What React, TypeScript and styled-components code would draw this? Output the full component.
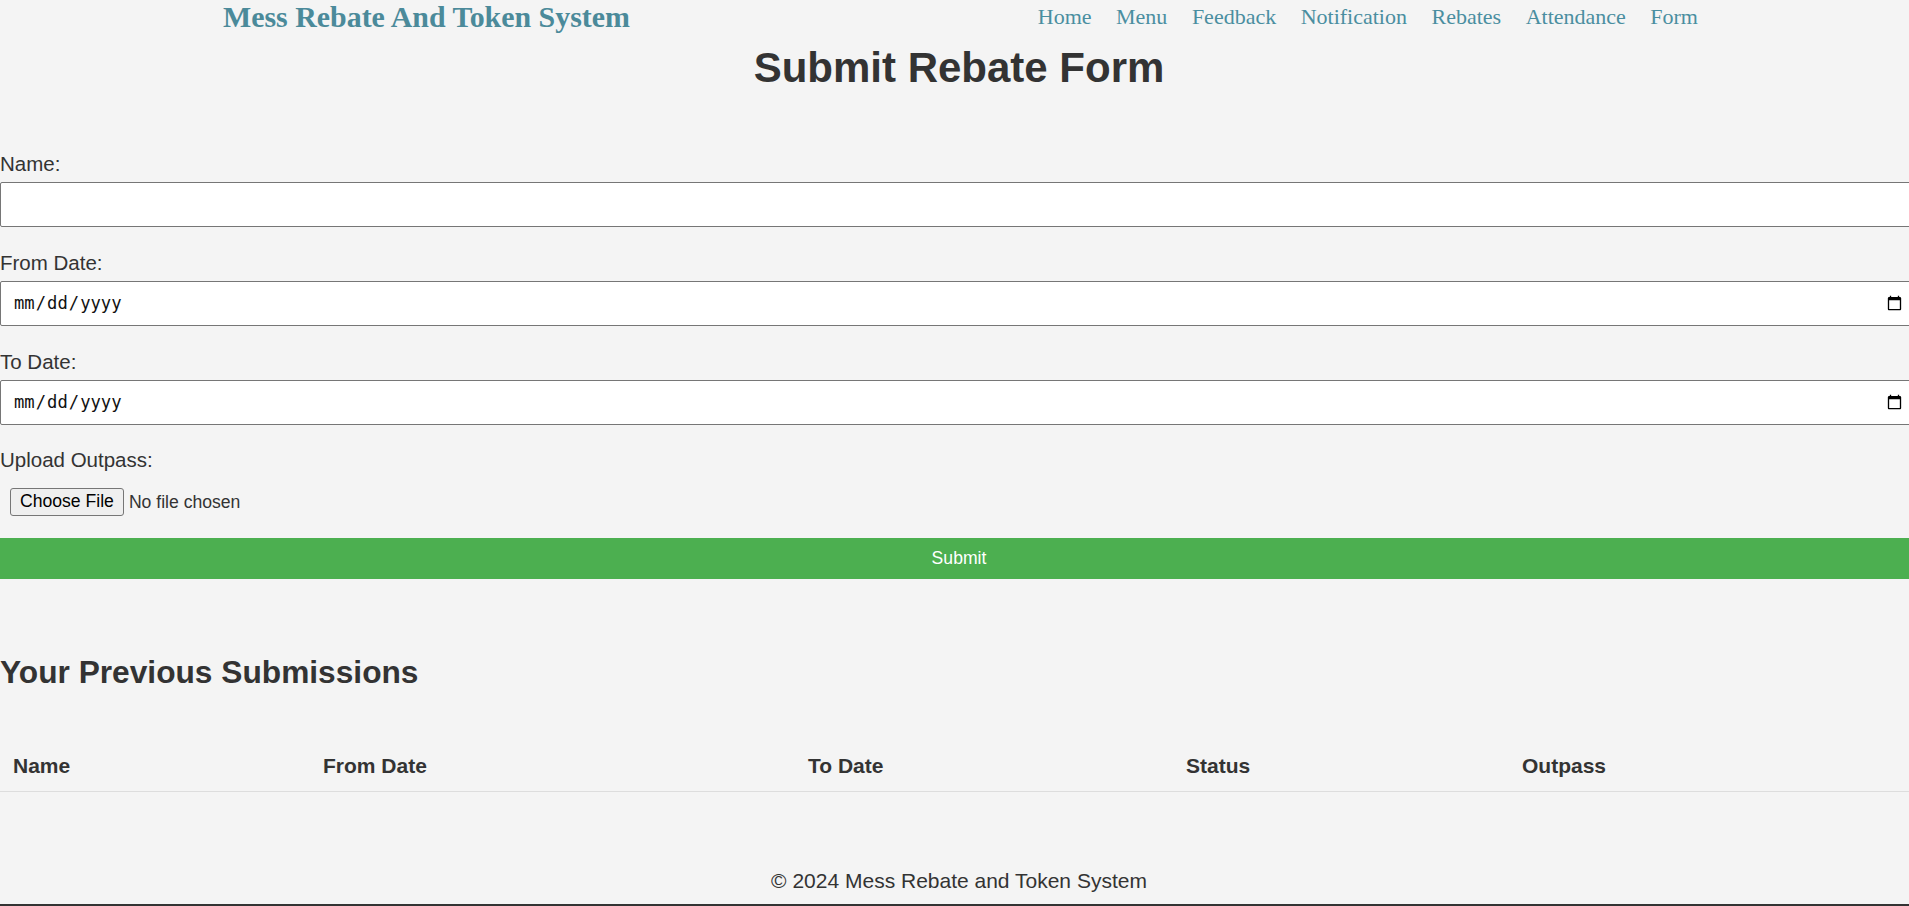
import React from "react";
import styled, { createGlobalStyle } from "styled-components";

const Global = createGlobalStyle`
  html, body { margin: 0; padding: 0; background: #f4f4f4; }
  body {
    overflow-x: hidden;
    font-family: "Liberation Sans", Arial, sans-serif;
    color: #333;
  }
  * { box-sizing: border-box; }
`;

const Page = styled.div`
  width: 1918px;
  display: flex;
  flex-direction: column;
`;

const Header = styled.header`
  height: 34px;
  display: flex;
  align-items: center;
  padding: 0 220px 0 223px;
`;

const Logo = styled.div`
  font-family: "Liberation Serif", "Times New Roman", serif;
  font-weight: bold;
  font-size: 29.9px;
  line-height: 34px;
  color: #4b8a9a;
`;

const Nav = styled.nav`
  margin-left: auto;
  display: flex;
  gap: 24.5px;
`;

const NavLink = styled.a`
  font-family: "Liberation Serif", "Times New Roman", serif;
  font-size: 22px;
  line-height: 34px;
  color: #4a8ea0;
  text-decoration: none;
`;

const Title = styled.h1`
  margin: 10px 0 0;
  font-size: 42px;
  line-height: 48px;
  font-weight: bold;
  text-align: center;
  color: #333;
`;

const Form = styled.form`
  margin-top: 60px;
  display: flex;
  flex-direction: column;
`;

const Label = styled.label<{ $gap?: number }>`
  display: block;
  font-size: 20.5px;
  line-height: 24px;
  margin: ${(p) => p.$gap ?? 0}px 0 6px;
  color: #333;
`;

const TextInput = styled.input`
  display: block;
  width: 100%;
  height: 45px;
  padding: 0 12px;
  border: 1px solid #767676;
  border-radius: 2px;
  background: #fff;
  font-family: "Liberation Sans", Arial, sans-serif;
  font-size: 17.6px;
  color: #111;
`;

const DateInput = styled(TextInput)`
  height: 45.5px;
  font-family: "DejaVu Sans Mono", "Liberation Mono", monospace;
  font-size: 17.2px;
`;

const FileInput = styled.input`
  display: block;
  margin: 10px 0 0 10px;
  font-family: "Liberation Sans", Arial, sans-serif;
  font-size: 17.6px;
  color: #333;
  &::file-selector-button {
    font-family: "Liberation Sans", Arial, sans-serif;
    font-size: 17.6px;
    height: 28px;
    padding: 0 9px;
    margin-right: 5px;
    border: 1px solid #767676;
    border-radius: 3px;
    background: #efefef;
    color: #000;
  }
`;

const SubmitButton = styled.button`
  margin-top: 22px;
  width: 100%;
  height: 41px;
  border: none;
  background: #4caf50;
  color: #fff;
  font-family: "Liberation Sans", Arial, sans-serif;
  font-size: 17.6px;
`;

const SubTitle = styled.h2`
  margin: 75px 0 0;
  font-size: 31.7px;
  line-height: 36px;
  font-weight: bold;
  color: #333;
`;

const Table = styled.table`
  margin-top: 51px;
  width: 100%;
  border-collapse: collapse;
  table-layout: fixed;
`;

const Th = styled.th<{ $w?: number }>`
  width: ${(p) => (p.$w ? `${p.$w}px` : "auto")};
  padding: 13px;
  text-align: left;
  font-size: 21px;
  line-height: 24px;
  font-weight: bold;
  color: #333;
  border-bottom: 1px solid #ddd;
`;

const Footer = styled.footer`
  margin-top: 77px;
  text-align: center;
  font-size: 21px;
  line-height: 24px;
  color: #333;
`;

const DarkBand = styled.div`
  margin-top: 11.5px;
  height: 30px;
  background: #333;
`;

const links = ["Home", "Menu", "Feedback", "Notification", "Rebates", "Attendance", "Form"];

export default function App() {
  return (
    <>
      <Global />
      <Page>
        <Header>
          <Logo>Mess Rebate And Token System</Logo>
          <Nav>
            {links.map((l) => (
              <NavLink key={l} href="#">
                {l}
              </NavLink>
            ))}
          </Nav>
        </Header>
        <Title>Submit Rebate Form</Title>
        <Form onSubmit={(e) => e.preventDefault()}>
          <Label htmlFor="name">Name:</Label>
          <TextInput id="name" type="text" />
          <Label $gap={23.5} htmlFor="from">From Date:</Label>
          <DateInput id="from" type="date" />
          <Label $gap={23.5} htmlFor="to">To Date:</Label>
          <DateInput id="to" type="date" />
          <Label $gap={22.9} htmlFor="outpass">Upload Outpass:</Label>
          <FileInput id="outpass" type="file" />
          <SubmitButton type="submit">Submit</SubmitButton>
        </Form>
        <SubTitle>Your Previous Submissions</SubTitle>
        <Table>
          <thead>
            <tr>
              <Th $w={310}>Name</Th>
              <Th $w={485}>From Date</Th>
              <Th $w={378}>To Date</Th>
              <Th $w={336}>Status</Th>
              <Th>Outpass</Th>
            </tr>
          </thead>
          <tbody />
        </Table>
        <Footer>© 2024 Mess Rebate and Token System</Footer>
        <DarkBand />
      </Page>
    </>
  );
}
